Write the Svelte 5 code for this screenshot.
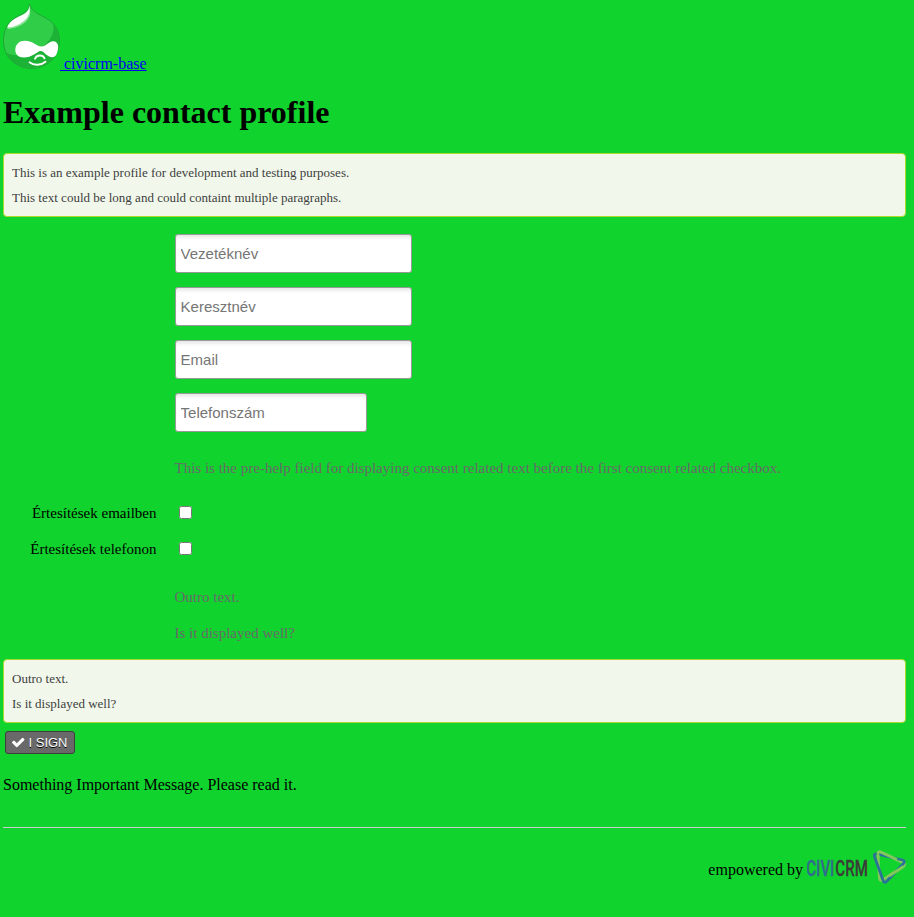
<script>
  const fields = [
    { label: 'Vezetéknév', short: false },
    { label: 'Keresztnév', short: false },
    { label: 'Email', short: false },
    { label: 'Telefonszám', short: true }
  ];
  const consents = ['Értesítések emailben', 'Értesítések telefonon'];
</script>

<div class="page">
  <header>
    <a href="#home"><svg class="drop" viewBox="0 0 57 66" width="57" height="66">
        <path d="M26.300 1C27 7 21 10 15 13C6 18 .5 25 .5 37.500C.5 54 13 65.500 28.500 65.500C44 65.500 56.500 54 56.500 38C56.500 29 53 22 46 17C39 12 29 10 26.300 1Z" fill="#30cd49" stroke="#209b35" stroke-width=".8" />
        <path d="M50 20C55 25 56.200 32 56.200 38C56.200 54 44 65 28.500 65C15 65 6 58 2 49.500C20 57 38 49 47 36C51 30 51 25 50 20Z" fill="#1cb235" />
        <path d="M27 7.500C29 17 17 25 5 26L4.300 24.500Z" fill="#8be49a" />
        <path d="M26.300 2C26.500 8 22 11 17 13C10 16 5.500 20 4.300 24.500C12 24.500 19 20 23 16C26.500 12 27.500 7 26.300 2Z" fill="#fff" />
        <path d="M22 37.700C30 37.700 34 43.500 38.500 43.500C43 43.500 46 38.300 50 38.300C56 38.300 56 45 54 50C52 56 47 54.500 43 51.500C41 49.500 39 47.500 37 48C33 49.500 29 54.500 21 54.500C15 54.500 12.300 51 12.300 47C12.300 41 16.500 37.700 22 37.700Z" fill="#fff" />
        <path d="M32 55.700C33.500 51.500 40 51.500 41.500 55.300M26.500 59.300C31 62.800 38 62.500 42.500 58.700" fill="none" stroke="#fff" stroke-width="1.800" stroke-linecap="round" />
      </svg>&nbsp;civicrm-base</a>
  </header>

  <h1>Example contact profile</h1>

  <div class="help">
    <p>This is an example profile for development and testing purposes.</p>
    <p>This text could be long and could containt multiple paragraphs.</p>
  </div>

  <form>
    {#each fields as field}
      <div class="field"><input class:short={field.short} type="text" placeholder={field.label} /></div>
    {/each}
    <div class="description pre">This is the pre-help field for displaying consent related text before the first consent related checkbox.</div>
    {#each consents as consent, i}
      <div class="consent">
        <label for="consent-{i}">{consent}</label>
        <input id="consent-{i}" type="checkbox" />
      </div>
    {/each}
    <div class="description post">
      <p>Outro text.</p>
      <p>Is it displayed well?</p>
    </div>
  </form>

  <div class="help">
    <p>Outro text.</p>
    <p>Is it displayed well?</p>
  </div>

  <button type="button">
    <svg viewBox="120 250 1552 1270" width="12.500" height="10.300"><path fill="#fff" d="M1671 566q0 40-28 68l-724 724-136 136q-28 28-68 28t-68-28l-136-136-362-362q-28-28-28-68t28-68l136-136q28-28 68-28t68 28l294 295 656-657q28-28 68-28t68 28l136 136q28 28 28 68z" /></svg>
    <span>I SIGN</span>
  </button>

  <p class="message">Something Important Message. Please read it.</p>

  <footer>
    <span>empowered by</span>
    <svg class="civi" viewBox="0 0 99 36" width="99" height="36">
      <g transform="scale(.7 1)" font-family="Roboto, sans-serif" font-size="21.500" font-weight="500" stroke-width=".3">
        <text x="-1" y="26.600" fill="#316b8d" stroke="#316b8d">CIVI</text>
        <text x="40.500" y="26.600" fill="#3b3c38" stroke="#3b3c38">CRM</text>
      </g>
      <g fill="none" stroke-width="2.700" stroke-linejoin="round">
        <path d="M72.300 28.500L71 5.500Q70.500 2 73.500 3L96.500 14Q99 15.500 96.500 17.500L75.500 31Q72.500 32.500 72.300 28.500Z" stroke="#82c95a" />
        <path d="M67.500 7.500Q66.500 4.500 70 5L95.500 11Q98.500 12 96.500 14.500L79.500 32.500Q77.500 34.500 76.300 32Z" stroke="#2c719a" />
        <path d="M71.500 8L71 5.500Q70.500 2 73.500 3L90 10.500M96.500 17.500L82 27" stroke="#82c95a" />
      </g>
    </svg>
  </footer>
</div>

<style>
  :global(body) {
    margin: 0;
    background: #11d32e;
  }
  .page {
    box-sizing: border-box;
    min-height: 917px;
    padding: 3px 8px 0 3px;
    font: 16px/18px "Liberation Serif", serif;
    color: #000;
  }
  header {
    height: 70px;
  }
  header a {
    color: #0000ee;
  }
  .drop {
    vertical-align: baseline;
  }
  h1 {
    margin: 21px 0 22px;
    font-size: 32px;
    line-height: 37px;
  }
  .help {
    box-sizing: border-box;
    height: 64px;
    padding: 7px 8px;
    border: 1px solid #acda2e;
    border-radius: 4px;
    background: #f1f8eb;
    color: #3e3e3e;
    font-size: 13px;
  }
  .help p {
    margin: 0 0 1px;
    line-height: 24px;
  }
  form {
    padding-top: 17px;
    height: 425px;
    font-size: 15px;
  }
  .field {
    height: 39px;
    margin: 0 0 14px 172px;
  }
  .field input {
    display: block;
    box-sizing: border-box;
    width: 237px;
    height: 39px;
    padding: 0 4.600px;
    border: 1px solid #999;
    border-radius: 3px;
    background: #fff;
    box-shadow: inset 0 4px 4px -2px #e3e3e3;
    font: 15px "Liberation Sans", sans-serif;
  }
  .field .short {
    width: 192px;
  }
  .field input::placeholder {
    color: #757575;
  }
  .description {
    margin-left: 171.500px;
    color: #696969;
    line-height: 18px;
  }
  .pre {
    margin-top: 27px;
    height: 36px;
  }
  .consent {
    display: flex;
    align-items: flex-start;
    height: 36px;
  }
  .consent label {
    width: 153.500px;
    text-align: right;
  }
  .consent input {
    width: 13px;
    height: 13px;
    margin: 2px 0 0 22px;
  }
  .pre + .consent {
    margin-top: 9px;
  }
  .post {
    margin-top: 12px;
  }
  .post p {
    margin: 0 0 18px;
  }
  button {
    box-sizing: border-box;
    display: flex;
    align-items: center;
    gap: 4px;
    width: 70px;
    height: 23px;
    margin: 8px 0 0 2px;
    padding: 0 0 0 6px;
    border: 1px solid #3e3e3e;
    border-radius: 3px;
    background: #696969;
    color: #fff;
    font: 13px/15px "Liberation Sans", sans-serif;
    text-shadow: 0 1px 0 #000;
    white-space: nowrap;
  }
  .message {
    margin: 22px 0 33px;
  }
  footer {
    display: flex;
    justify-content: flex-end;
    align-items: flex-start;
    gap: 4px;
    padding-top: 21px;
    border-top: 1px solid #ccc;
  }
  footer span {
    margin-top: 12px;
  }
</style>
